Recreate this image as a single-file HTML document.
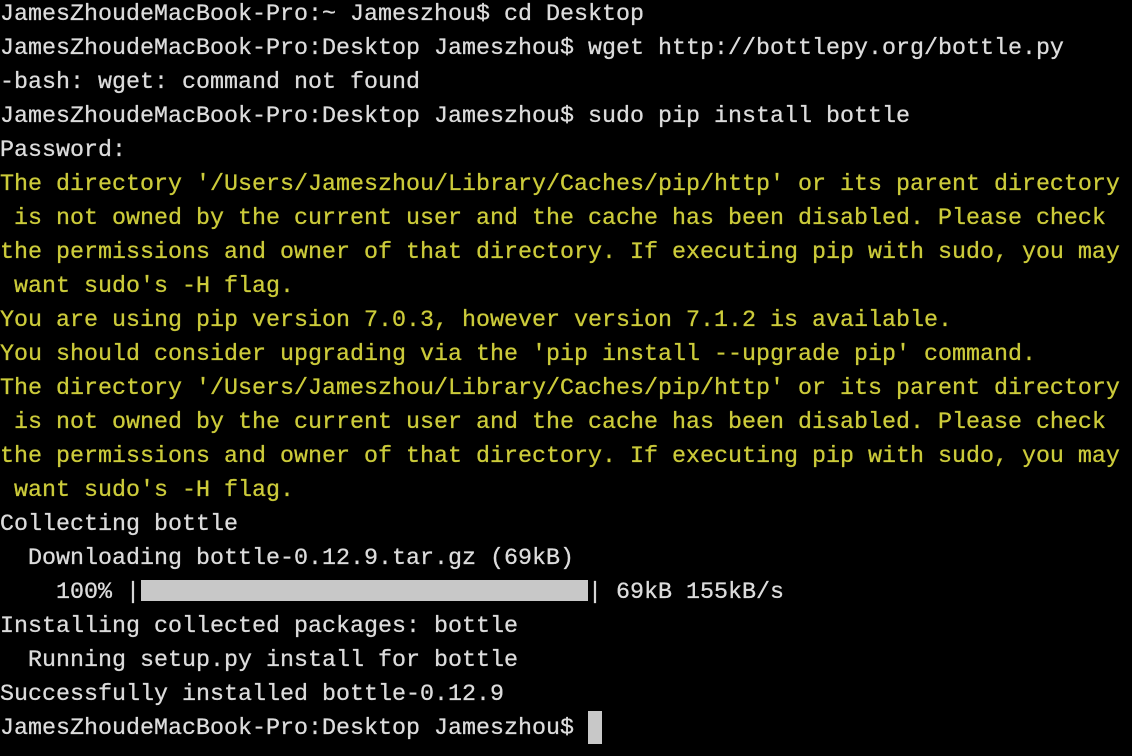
<!DOCTYPE html>
<html><head><meta charset="utf-8"><style>
html,body{margin:0;padding:0;background:#000;width:1132px;height:756px;overflow:hidden}
pre{margin:0;position:absolute;left:0;top:-2px;font-family:"Liberation Mono",monospace;font-size:23.33px;line-height:34px;color:#dcdcdc;white-space:pre;-webkit-text-stroke:0.3px currentColor}
.y{color:#cccb3a}
.bar{position:absolute;left:141px;top:580px;width:447px;height:21px;background:#c8c8c8}
.cur{position:absolute;left:588px;top:711px;width:14px;height:33px;background:#c8c8c8}
</style></head><body>
<pre>JamesZhoudeMacBook-Pro:~ Jameszhou$ cd Desktop
JamesZhoudeMacBook-Pro:Desktop Jameszhou$ wget http://bottlepy.org/bottle.py
-bash: wget: command not found
JamesZhoudeMacBook-Pro:Desktop Jameszhou$ sudo pip install bottle
Password:
<span class="y">The directory '/Users/Jameszhou/Library/Caches/pip/http' or its parent directory
 is not owned by the current user and the cache has been disabled. Please check
the permissions and owner of that directory. If executing pip with sudo, you may
 want sudo's -H flag.
You are using pip version 7.0.3, however version 7.1.2 is available.
You should consider upgrading via the 'pip install --upgrade pip' command.
The directory '/Users/Jameszhou/Library/Caches/pip/http' or its parent directory
 is not owned by the current user and the cache has been disabled. Please check
the permissions and owner of that directory. If executing pip with sudo, you may
 want sudo's -H flag.</span>
Collecting bottle
  Downloading bottle-0.12.9.tar.gz (69kB)
    100% |                                | 69kB 155kB/s
Installing collected packages: bottle
  Running setup.py install for bottle
Successfully installed bottle-0.12.9
JamesZhoudeMacBook-Pro:Desktop Jameszhou$ </pre>
<div class="bar"></div>
<div class="cur"></div>
</body></html>
